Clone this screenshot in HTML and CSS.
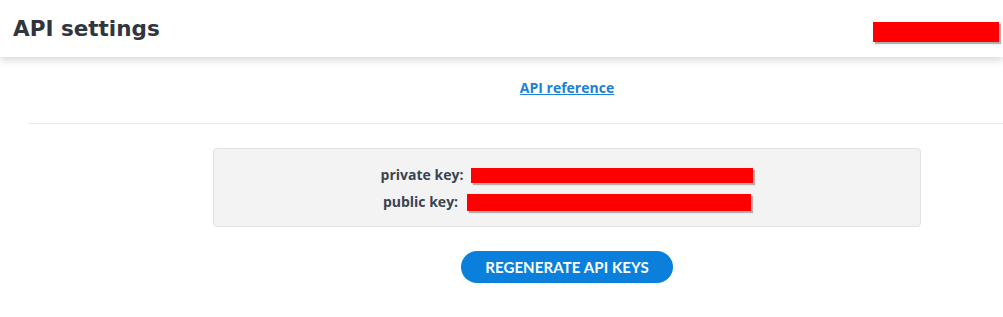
FILE: index.html
```html
<!DOCTYPE html>
<html>
<head>
<meta charset="utf-8">
<link rel="stylesheet" href="styles.css">
</head>
<body>
<header class="topbar">
  <h1 class="title">API settings</h1>
  <span class="redact redact-user"></span>
</header>
<main class="content">
  <div class="ref-row centered"><a class="ref-link" href="#">API reference</a></div>
  <hr class="divider">
  <div class="centered">
    <section class="keys">
      <div class="key-row"><span class="key-label">private key:</span><span class="redact redact-private"></span></div>
      <div class="key-row"><span class="key-label">public key:</span><span class="redact redact-public"></span></div>
    </section>
  </div>
  <div class="actions centered"><button class="btn-regen">REGENERATE API KEYS</button></div>
</main>
</body>
</html>
```

FILE: styles.css
```css
html, body {
  margin: 0;
  padding: 0;
  background: #fff;
  overflow: hidden;
}
body {
  font-family: "Open Sans", "Liberation Sans", sans-serif;
  color: #333a45;
}
.topbar {
  height: 57px;
  display: flex;
  align-items: center;
  justify-content: space-between;
  padding: 0 4px 0 13px;
  background: #fff;
  box-shadow: 0 3px 8px rgba(0,0,0,0.16);
  position: relative;
  z-index: 1;
}
.title {
  margin: 0;
  font-family: "DejaVu Sans", sans-serif;
  font-weight: 700;
  font-size: 21.5px;
  color: #30353e;
  margin-top: -1px;
}
.redact {
  display: inline-block;
  background: #ff0000;
  box-shadow: 2px 2px 1px #b0b0b0;
}
.redact-user {
  width: 126px;
  height: 20px;
  margin-top: 6px;
}
.content {
  margin-left: 28px;
}
.centered {
  padding-left: 103px;
  text-align: center;
}
.ref-row {
  padding-top: 19px;
  height: 47px;
}
.ref-link {
  font-weight: 700;
  font-size: 14px;
  color: #1b7fd6;
  text-decoration: underline;
  line-height: 20px;
}
.divider {
  border: 0;
  border-top: 1px solid #e8e8e8;
  margin: 0;
}
.keys {
  width: 706px;
  margin: 24px auto 0;
  background: #f3f3f3;
  border: 1px solid #e2e2e2;
  border-radius: 4px;
  padding: 12px 0 11px;
}
.key-row {
  display: flex;
  justify-content: center;
  align-items: center;
  gap: 8px;
  height: 27px;
  font-weight: 700;
  font-size: 14px;
  color: #3a4350;
}
.redact-private {
  width: 282px;
  height: 15px;
  margin-top: 2px;
}
.redact-public {
  width: 284px;
  height: 17px;
  margin-left: 1px;
  margin-top: 2px;
}
.actions {
  padding-top: 24px;
}
.btn-regen {
  width: 212px;
  height: 32px;
  border: 0;
  border-radius: 16px;
  background: #0a80dc;
  color: #fff;
  font-family: "Lato", "Liberation Sans", sans-serif;
  font-weight: 700;
  font-size: 15px;
  letter-spacing: 0.1px;
  padding: 0;
  cursor: pointer;
}
```
